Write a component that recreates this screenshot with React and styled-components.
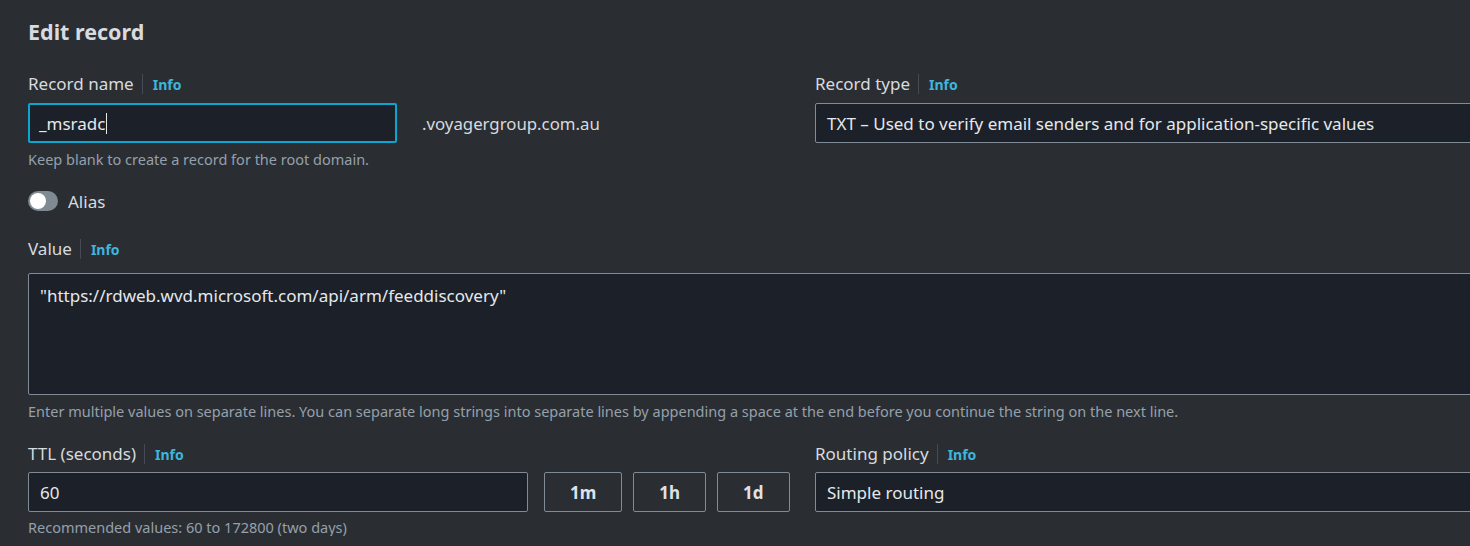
import React from "react";
import styled, { createGlobalStyle } from "styled-components";

const bg = "#2a2e33";
const fieldBg = "#1b2029";
const border = "#808b96";
const focus = "#0ba6cf";
const labelColor = "#d7dadf";
const hintColor = "#95a0ab";
const infoColor = "#3fb5dc";
const font = `"Noto Sans", "Open Sans", sans-serif`;

const GlobalStyle = createGlobalStyle`
  html, body {
    margin: 0;
    background: ${bg};
    overflow: hidden;
  }
  body {
    font-family: ${font};
    color: ${labelColor};
  }
`;

const Page = styled.div`
  width: 1580px;
  padding: 20px 0 0 28px;
  box-sizing: border-box;
`;

const Title = styled.h2`
  margin: 0;
  font-size: 21.5px;
  line-height: 24px;
  font-weight: 700;
  color: ${labelColor};
`;

const TwoCol = styled.div`
  display: grid;
  grid-template-columns: 762px 740px;
  column-gap: 25px;
  margin-top: ${(p) => p.$top || 0}px;
`;

const Field = styled.div`
  display: flex;
  flex-direction: column;
`;

const LabelRow = styled.div`
  display: flex;
  align-items: center;
  height: 22px;
  margin-bottom: ${(p) => p.$gap || 8}px;
`;

const Label = styled.span`
  font-size: 17px;
  line-height: 22px;
  color: ${labelColor};
`;

const Divider = styled.span`
  width: 1px;
  height: 20px;
  background: #454b54;
  margin: 0 10px 0 8px;
`;

const Info = styled.span`
  font-size: 14px;
  font-weight: 700;
  color: ${infoColor};
`;

const InputRow = styled.div`
  display: flex;
  align-items: center;
`;

const Box = styled.div`
  box-sizing: border-box;
  height: 40px;
  width: ${(p) => (p.$w ? `${p.$w}px` : "100%")};
  flex-shrink: 0;
  background: ${fieldBg};
  border: ${(p) => (p.$focused ? `2px solid ${focus}` : `1px solid ${border}`)};
  border-radius: 2px;
  padding: ${(p) => (p.$focused ? "0 9px" : "0 11px")};
  display: flex;
  align-items: center;
  font-size: 17px;
  color: #e6e8eb;
`;

const TextArea = styled.div`
  box-sizing: border-box;
  height: 122px;
  width: 100%;
  background: ${fieldBg};
  border: 1px solid ${border};
  border-radius: 2px;
  padding: 11px 11px;
  font-size: 17px;
  line-height: 22px;
  color: #e6e8eb;
`;

const Caret = styled.span`
  display: inline-block;
  width: 1px;
  height: 21px;
  background: #e6e8eb;
  margin-left: 1px;
`;

const Suffix = styled.span`
  margin-left: 25px;
  font-size: 16.8px;
  color: ${labelColor};
`;

const Hint = styled.div`
  margin-top: ${(p) => p.$top || 7}px;
  font-size: 14.5px;
  line-height: 18px;
  color: ${hintColor};
`;

const ToggleRow = styled.div`
  display: flex;
  align-items: center;
  margin-top: 23px;
  height: 20px;
`;

const Track = styled.span`
  position: relative;
  width: 30px;
  height: 20px;
  border-radius: 10px;
  background: #7f8a93;
`;

const Knob = styled.span`
  position: absolute;
  left: 2px;
  top: 2px;
  width: 16px;
  height: 16px;
  border-radius: 50%;
  background: #fff;
`;

const ToggleLabel = styled.span`
  margin-left: 10px;
  font-size: 17px;
  color: ${labelColor};
`;

const Section = styled.div`
  margin-top: ${(p) => p.$top || 0}px;
  width: 1500px;
`;

const Button = styled.button`
  box-sizing: border-box;
  height: 40px;
  padding: 0 25px;
  margin-left: ${(p) => p.$gap}px;
  background: transparent;
  border: 1px solid ${border};
  border-radius: 2px;
  font-family: ${font};
  font-size: 17px;
  font-weight: 700;
  color: #dfe2e6;
`;

const FieldLabel = ({ children, gap }) => (
  <LabelRow $gap={gap}>
    <Label>{children}</Label>
    <Divider />
    <Info>Info</Info>
  </LabelRow>
);

export default function App() {
  return (
    <>
      <GlobalStyle />
      <Page>
        <Title>Edit record</Title>

        <TwoCol $top={29}>
          <Field>
            <FieldLabel>Record name</FieldLabel>
            <InputRow>
              <Box $w={369} $focused>
                _msradc<Caret />
              </Box>
              <Suffix>.voyagergroup.com.au</Suffix>
            </InputRow>
            <Hint>Keep blank to create a record for the root domain.</Hint>
          </Field>
          <Field>
            <FieldLabel>Record type</FieldLabel>
            <Box>TXT – Used to verify email senders and for application-specific values</Box>
          </Field>
        </TwoCol>

        <ToggleRow>
          <Track>
            <Knob />
          </Track>
          <ToggleLabel>Alias</ToggleLabel>
        </ToggleRow>

        <Section $top={27}>
          <FieldLabel gap={13}>Value</FieldLabel>
          <TextArea>"https://rdweb.wvd.microsoft.com/api/arm/feeddiscovery"</TextArea>
          <Hint $top={7}>
            Enter multiple values on separate lines. You can separate long strings into separate lines by
            appending a space at the end before you continue the string on the next line.
          </Hint>
        </Section>

        <TwoCol $top={23}>
          <Field>
            <FieldLabel gap={7}>TTL (seconds)</FieldLabel>
            <InputRow>
              <Box $w={500}>60</Box>
              <Button $gap={16}>1m</Button>
              <Button $gap={11}>1h</Button>
              <Button $gap={11}>1d</Button>
            </InputRow>
            <Hint $top={6}>Recommended values: 60 to 172800 (two days)</Hint>
          </Field>
          <Field>
            <FieldLabel gap={7}>Routing policy</FieldLabel>
            <Box>Simple routing</Box>
          </Field>
        </TwoCol>
      </Page>
    </>
  );
}
